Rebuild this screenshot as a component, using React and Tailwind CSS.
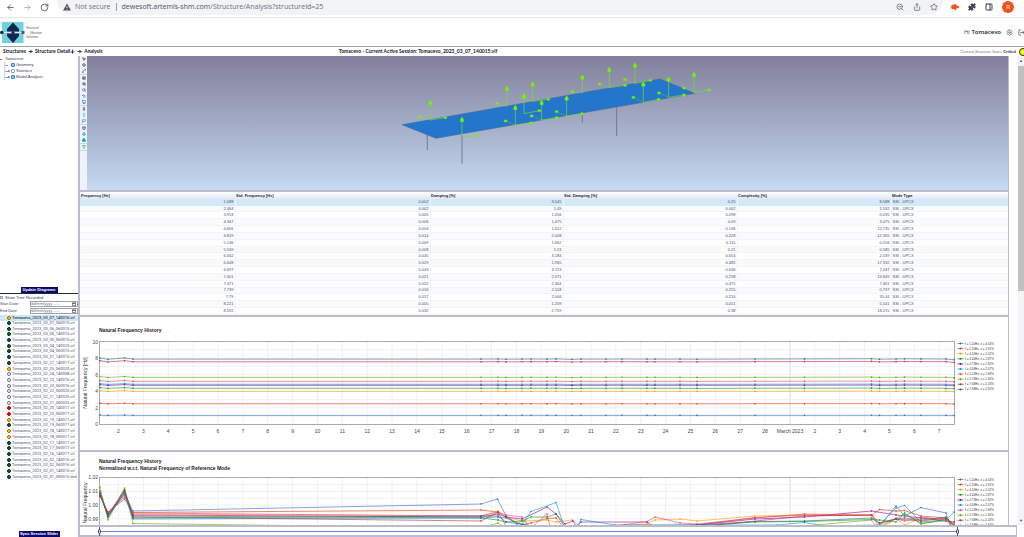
import { useState } from 'react';
import {
  ArrowLeft, ArrowRight, ArrowDown, RotateCw, ZoomOut, Share, Star, Puzzle,
  PanelRight, EllipsisVertical, Settings, LogOut, MousePointer2, Move, Spline, Printer,
  ZoomIn, Search, Undo2, Monitor, Pin, MoveVertical, Flag, Box, Rotate3d, Boxes, Filter,
} from 'lucide-react';

const COLORS = ['#3366cc', '#dc3912', '#ff9900', '#109618', '#990099', '#0099c6', '#dd4477', '#66aa00', '#b82e2e', '#316395'];

const SESSIONS = [
  ['03_07_140016', 'yellow'], ['03_07_060015', 'green'], ['03_06_060015', 'green'], ['03_05_140015', 'green'],
  ['03_05_060015', 'green'], ['03_04_140015', 'green'], ['03_04_060015', 'green'], ['03_01_140015', 'green'],
  ['02_27_140017', 'green'], ['02_25_060020', 'yellow'], ['02_24_140008', 'white'], ['02_23_140016', 'white'],
  ['02_23_060016', 'white'], ['02_22_060025', 'white'], ['02_21_140025', 'white'], ['02_21_060025', 'white'],
  ['02_20_140017', 'red'], ['02_20_060017', 'red'], ['02_19_140017', 'yellow'], ['02_19_060017', 'green'],
  ['02_18_140017', 'yellow'], ['02_18_060017', 'yellow'], ['02_17_140017', 'green'], ['02_17_060017', 'green'],
  ['02_16_140017', 'green'], ['02_02_140016', 'green'], ['02_02_060016', 'green'], ['02_01_140015', 'green'],
];

const DOTS = {
  yellow: 'bg-yellow-300 border-yellow-700',
  green: 'bg-green-800 border-green-950',
  white: 'bg-white border-gray-500',
  red: 'bg-red-600 border-red-700',
};

const MODES = [
  ['1.088', '0.002', '3.545', '0.25', '8.588'],
  ['2.464', '0.002', '1.49', '0.062', '1.532'],
  ['3.953', '0.005', '1.056', '0.098', '0.035'],
  ['4.347', '0.006', '1.475', '0.09', '3.075'],
  ['4.666', '0.004', '1.612', '0.136', '12.735'],
  ['4.819', '0.014', '2.008', '0.228', '12.365'],
  ['5.136', '0.009', '1.662', '0.115', '0.556'],
  ['5.569', '0.008', '1.53', '0.21', '0.585'],
  ['6.062', '0.045', '3.184', '0.654', '2.039'],
  ['6.648', '0.029', '1.965', '0.482', '17.332'],
  ['6.697', '0.043', '3.723', '0.636', '7.437'],
  ['7.401', '0.021', '2.071', '0.258', '13.849'],
  ['7.471', '0.022', '2.364', '0.475', '7.461'],
  ['7.739', '0.016', '2.558', '0.255', '0.737'],
  ['7.79', '0.017', '2.006', '0.216', '35.44'],
  ['8.221', '0.005', '1.209', '0.051', '5.541'],
  ['8.592', '0.032', '2.759', '0.38', '18.215'],
];

const LEGEND = [
  ['1.10', '4.04'], ['2.50', '1.91'], ['4.01', '1.02'], ['4.40', '1.87'], ['4.72', '1.90'],
  ['4.84', '2.07'], ['5.21', '1.68'], ['5.70', '1.30'], ['7.66', '2.18'], ['7.94', '2.30'],
];

const DAYS = [...Array.from({ length: 27 }, (_, i) => String(i + 2)), 'March 2023', '2', '3', '4', '5', '6', '7'];
const dayX = (i) => 38.5 + i * 24.87;

const TIMES = [20, 28, 44.5, 53, 401, 418, 426, 442, 451, 467, 476, 492, 501, 526, 542, 567, 575, 600, 617, 675, 724.5, 791.5, 799.5, 816, 824.5, 841, 866, 874];
const LEVELS = [1.1, 2.5, 4, 4.36, 4.72, 4.84, 5.2, 5.68, 7.56, 7.88];
const WOBBLE = [0.12, -0.02, 0.12, 0, 0, 0.01, -0.01, 0, 0.01, 0, 0.02, -0.03, 0, 0, 0.01, 0, 0, 0, -0.01, 0.01, 0.02, 0.04, -0.01, 0.01, 0.03, 0.02, 0.01, -0.08];
const HISTORY = LEVELS.map((v) => TIMES.map((t, i) => [t, 107.5 - 8.3 * (v + WOBBLE[i] * (v / 8 + 0.1))]));

const NORMALIZED = [
  [[20, 42], [28, 62], [44.5, 42], [53, 59], [401, 52], [417.5, 47], [426, 64], [442, 76], [675, 80], [799.5, 74], [816, 54], [824.5, 64], [841, 55.5], [866, 61], [872, 78]],
  [[20, 44], [28, 60], [44.5, 47], [53, 60.5], [401, 58], [417.5, 60], [426, 65], [442, 73], [451, 71], [467, 66.5], [476, 66], [484, 76], [617, 73], [675, 65.5], [724.5, 63], [791.5, 63.5], [799.5, 57.5], [816, 59], [824.5, 58.5], [841, 64], [866, 66], [874, 72]],
  [[20, 41], [28, 64], [44.5, 41], [53, 62], [401, 64], [418, 59], [426, 65], [442, 69], [467, 68], [476, 70], [492, 68], [501, 76], [567, 72], [575, 68], [600, 67], [617, 69], [675, 64], [724.5, 63], [791.5, 63], [799.5, 73], [816, 66], [824.5, 73], [841, 66], [866, 67], [874, 72]],
  [[20, 39], [28, 65], [44.5, 38], [53, 64], [401, 66], [418, 68], [426, 70], [442, 69], [451, 65], [467, 65], [476, 62], [484, 74], [617, 74], [675, 70], [724.5, 69.5], [791.5, 67.5], [799.5, 68], [816, 70], [824.5, 61], [841, 72], [866, 67], [874, 73]],
  [[20, 42], [28, 63], [44.5, 40], [53, 63], [401, 65], [418, 62], [426, 65], [442, 67], [467, 55], [476, 62], [485, 72], [493, 69], [496, 74], [501, 70], [567, 70], [575, 76], [617, 73], [675, 67], [724.5, 65], [791.5, 59], [816, 63], [841, 66], [866, 69], [874, 70]],
  [[20, 40], [28, 64], [44.5, 43], [53, 67], [401, 66], [418, 65], [426, 66], [442, 73], [451, 59.5], [476, 50.5], [484, 74], [496, 80], [501, 67.5], [535, 73], [697, 73], [724.5, 70.5], [745, 74], [799.5, 73], [816, 56], [824.5, 53.5], [841, 70], [866, 68], [874, 60]],
  [[20, 43], [28, 61], [44.5, 45], [53, 61], [401, 64], [418, 60], [426, 63], [442, 65], [451, 76], [467, 62], [470, 75], [520, 76], [567, 69.5], [575, 65], [600, 71], [617, 72], [675, 66], [724.5, 62], [791.5, 63], [799.5, 76], [816, 67], [824.5, 69], [841, 65], [866, 68], [874, 73]],
  [[20, 35], [28, 68], [44.5, 36], [53, 71.5], [401, 76], [418, 71], [430, 78], [442, 68], [451, 76], [675, 76], [724.5, 74], [791.5, 68], [797, 76], [824.5, 62], [841, 71], [866, 69], [874, 76]],
  [[20, 44], [28, 62], [44.5, 38], [53, 65], [401, 69], [418, 60], [426, 74], [617, 75], [724.5, 64], [791.5, 63], [799.5, 71], [816, 67], [841, 69], [866, 66], [874, 74]],
  [[20, 41], [28, 65], [44.5, 40], [53, 66], [401, 64], [418, 64], [426, 70], [442, 72], [451, 74], [617, 73], [675, 69.5], [724.5, 69], [791.5, 66], [799.5, 71], [816, 67], [824.5, 66], [841, 68], [866, 65], [874, 76]],
];

// [x, y, arrow tip y, left tip, right tip]
const SENSORS = [
  [151, 195, 137, [121, 186], [196, 188]],
  [246, 246, 188, null, [291, 241]],
  [381, 154, 95, [352, 145], null],
  [458, 139, 82, [430, 128], [505, 133]],
  [432, 176, 117, null, [478, 167]],
  [406, 211, 152, [377, 198], [453, 204]],
  [485, 195, 137, [455, 183], [530, 188]],
  [560, 183, 124, [530, 170], [606, 176]],
  [607, 114, 61, [577, 110], null],
  [688, 98, 38, [659, 87], [735, 91]],
  [765, 85, 25, [735, 74], [811, 76]],
  [790, 142, 82, [760, 127], [836, 133]],
  [866, 127, 67, [837, 114], [912, 120]],
  [942, 113, 53, [912, 99], [988, 105]],
];

const TOOLS = [
  [[MousePointer2, 'Select', 'text-black'], [Move, 'Move', 'text-gray-700'], [Spline, 'Path', 'text-gray-600']],
  [[Printer, 'Print', 'text-gray-700'], [ZoomIn, 'Zoom in', 'text-gray-700'], [Search, 'Zoom window', 'text-purple-800'], [Undo2, 'Undo', 'text-blue-600'], [Monitor, 'Display', 'text-blue-600']],
  [[Pin, 'Pin', 'text-gray-700'], [MoveVertical, 'Vertical', 'text-sky-500'], [Flag, 'Flag', 'text-blue-600']],
  [[Box, 'Solid', 'text-blue-900'], [Rotate3d, 'Rotate', 'text-cyan-600'], [Boxes, 'Blocks', 'text-cyan-600']],
  [[Filter, 'Filter', 'text-green-600']],
];

function BrowserBar() {
  return (
    <div className="flex h-[18px] shrink-0 items-center border-b border-gray-200 bg-white pb-[3px] font-['Open_Sans',sans-serif] text-[7px] text-gray-600">
      <div className="flex w-[57px] shrink-0 items-center gap-2 pl-[6px]">
        <button aria-label="Back"><ArrowLeft size={9} className="text-gray-700" /></button>
        <button aria-label="Forward"><ArrowRight size={9} className="text-gray-400" /></button>
        <button aria-label="Reload"><RotateCw size={9} className="text-gray-700" /></button>
      </div>
      <div className="flex h-[15px] flex-1 items-center rounded-b-full bg-[#f1f3f4] pr-[5px] pl-[6px]">
        <svg viewBox="0 0 8 8" className="mr-1 size-2">
          <path d="M4 .5 L8 7.500 H0 Z" fill="#555" />
          <path d="M4 3 V5 M4 5.800 V6.600" stroke="#fff" strokeWidth=".8" />
        </svg>
        <span className="text-gray-500">Not secure</span>
        <span className="mx-[5px] h-2 w-px bg-gray-400" />
        <span>dewesoft.artemis-shm.com<span className="text-gray-500">/Structure/Analysis?structureId=25</span></span>
        <div className="ml-auto flex gap-[9px]">
          <ZoomOut size={8} />
          <Share size={8} />
          <Star size={8} />
        </div>
      </div>
      <div className="flex w-[81px] shrink-0 items-center gap-[9px] pl-2">
        <svg viewBox="0 0 8 8" className="size-2 shrink-0">
          <path d="M0 3 L2 1.500 L3 2 L4 .5 L5.500 2.300 L8 3.500 V5 L5.500 5.500 L4.500 7.500 L3 6 L.5 6 Z" fill="#f4511e" />
        </svg>
        <Puzzle size={8} className="shrink-0 fill-gray-700 text-gray-700" />
        <PanelRight size={8} className="shrink-0 text-gray-700" strokeWidth={3} />
        <span className="flex size-3 shrink-0 items-center justify-center rounded-full bg-[#f4511e] text-[6px] text-white">R</span>
        <EllipsisVertical size={9} className="shrink-0" />
      </div>
    </div>
  );
}

function Logo() {
  return (
    <svg viewBox="0 0 44 23" className="h-[23px] w-11">
      <rect x="2" y="1" width="21.500" height="21" fill="#6fd3de" />
      <path d="M13 1.500 L19 8 V10.500 H7 V8 Z M7 12.500 H19 V15 L13 22 L7 15 Z" fill="#18264f" />
      <path d="M0 11.500 H24" stroke="#dfe8ee" strokeWidth="1" />
      <circle cx="1.800" cy="11.500" r="1.800" fill="#18264f" />
      <circle cx="13" cy="11.500" r="1.600" fill="#18264f" />
      <rect x="21.500" y="10" width="3" height="3" fill="#4a5674" />
      <g fontFamily="Liberation Sans, sans-serif" fontSize="3" fill="#555">
        <text x="26" y="8">Structural</text>
        <text x="30" y="12.500">Vibration</text>
        <text x="26" y="17">Solutions</text>
      </g>
    </svg>
  );
}

function Header() {
  return (
    <>
      <header className="flex h-[29px] shrink-0 items-center justify-between border-b border-gray-400 pt-px">
        <Logo />
        <div className="flex items-center gap-[5px] font-['Open_Sans',sans-serif] text-[6px] text-gray-700">
          <span>Hi <span className="font-semibold text-gray-900">Tomacevo</span></span>
          <button aria-label="Settings"><Settings size={7} className="text-gray-600" /></button>
          <button aria-label="Log out" className="-mr-px"><LogOut size={7} className="text-gray-800" /></button>
        </div>
      </header>
      <div className="flex h-[9px] shrink-0 items-center font-['Lato',sans-serif] text-[5px] leading-none text-gray-900">
        <nav className="flex flex-1 items-center gap-[2px] pl-[3px] font-bold">
          <a href="#structures">Structures</a>
          <ArrowRight size={5} strokeWidth={4} />
          <a href="#detail" className="flex items-center">Structure Detail<ArrowDown size={5} strokeWidth={4} /></a>
          <ArrowRight size={5} strokeWidth={4} />
          <a href="#analysis">Analysis</a>
        </nav>
        <h1 className="pr-[191px] font-bold">Tomacevo - Current Active Session: Tomacevo_2023_03_07_140015.vif</h1>
        <div className="flex flex-1 items-center justify-end gap-[3px] overflow-hidden text-[4px] text-gray-500">
          <span className="whitespace-nowrap">Current Structure State: <b className="text-gray-800">Critical</b></span>
          <span className="-mr-[3px] size-2 shrink-0 rounded-full border border-gray-800 bg-[#ffff00]" />
        </div>
      </div>
    </>
  );
}

function TreeItem({ label, checked, expandable }) {
  return (
    <li className="flex h-[6px] items-center">
      <span className="h-px w-[3px] bg-gray-400" />
      <span className="w-[3px] text-[4px]">{expandable ? '▸' : ''}</span>
      <label className="flex items-center gap-px">
        <input
          type="checkbox"
          defaultChecked={checked}
          className="size-1 appearance-none rounded-[1px] border border-gray-400 bg-white checked:border-blue-500 checked:bg-blue-300"
        />
        {label}
      </label>
    </li>
  );
}

function DateField({ id, label }) {
  return (
    <div className="flex h-[7px] items-center">
      <label htmlFor={id} className="w-[30px]">{label}</label>
      <div className="flex h-[6px] flex-1 items-center border border-gray-400 pr-px">
        <input id={id} placeholder="dd/mm/yyyy --:--" className="w-full min-w-0 text-[4px] leading-none placeholder:text-gray-500" />
        <svg viewBox="0 0 5 5" className="size-1 shrink-0" fill="none" stroke="#222" strokeWidth=".7">
          <path d="M.5 1 H4.500 V4.500 H.5 Z M.5 1.800 H4.500" />
        </svg>
      </div>
    </div>
  );
}

function Sidebar() {
  const [active, setActive] = useState(0);
  const files = [...SESSIONS.map(([name, dot]) => [`Tomacevo_2023_${name}.vif`, dot]), ['Tomacevo_2023_02_01_060015.dxd', 'green']];
  return (
    <aside className="flex w-[78px] shrink-0 flex-col overflow-hidden text-[4px] leading-none text-gray-700">
      <div className="h-[231px]">
        <p className="flex h-[6px] items-center gap-[3px]"><span className="h-px w-[2px] bg-gray-500" />Tomacevo</p>
        <ul className="ml-1 border-l border-gray-300">
          <TreeItem label="Geometry" checked />
          <TreeItem label="Statistics" expandable />
          <TreeItem label="Modal Analysis" checked expandable />
        </ul>
      </div>
      <button className="mx-auto h-[6px] w-[37px] bg-[#0a0a6a] font-bold text-white">Update Diagrams</button>
      <div className="border-t border-gray-800 py-px">
        <label className="flex h-[5px] items-center gap-[2px]">
          <input type="checkbox" className="size-[3px] appearance-none border border-gray-400" />
          Show Time Recorded
        </label>
        <DateField id="start" label="Start Date:" />
        <DateField id="end" label="End Date:" />
      </div>
      <ul className="grid h-[165px] auto-rows-fr font-['Roboto',sans-serif]">
        {files.map(([name, dot], i) => (
          <li key={name} className={i === active ? 'bg-[#cfe5f8] text-black' : 'border-b border-gray-100 text-gray-600'}>
            <button onClick={() => setActive(i)} className="flex h-full w-full items-center gap-px pl-[7px]">
              <span className={`size-1 shrink-0 rounded-full border ${DOTS[dot]}`} />
              <span className="whitespace-nowrap">{name}</span>
            </button>
          </li>
        ))}
      </ul>
      <button className="mx-auto mt-auto h-[6px] w-[41px] bg-[#0a0a6a] font-bold text-white">Sync Session Slider</button>
    </aside>
  );
}

function Viewer() {
  return (
    <section className="flex border-b-2 border-[#bcbccc]">
      <div className="flex w-[7px] shrink-0 flex-col bg-[#eef3fa]">
        {TOOLS.map((group, i) => (
          <div key={i} className="flex flex-col items-center gap-[2px] border-b border-gray-300 py-px">
            {group.map(([Icon, label, color]) => (
              <button key={label} aria-label={label}><Icon size={4} strokeWidth={3} className={color} /></button>
            ))}
          </div>
        ))}
      </div>
      <svg viewBox="0 0 921 134" className="min-w-0 flex-1 bg-linear-to-b from-[#82809a] to-[#c5daf3]">
        <g transform="translate(293 -1) scale(.3333)">
          <path d="M142 235V285M246 240V326M607 170V203M710 150V243" stroke="#77778f" strokeWidth="3" />
          <polygon points="66,209 168,250 945,115 840,72" fill="#2376cb" stroke="#3b6296" strokeWidth="1.500" />
          {SENSORS.map(([x, y, top, left, right]) => (
            <g key={`${x}-${y}`} fill="#73f500" stroke="#73e02a">
              <path d={`M${x} ${y}V${top}`} strokeWidth="2" />
              {left && <path d={`M${x} ${y}L${left[0]} ${left[1]}`} strokeWidth="1.500" strokeDasharray="5 2" />}
              {right && <path d={`M${x} ${y}L${right[0]} ${right[1]}`} strokeWidth="2" />}
              <path d={`M${x} ${top - 2}l5 8v6h-10v-6z`} />
              {left && <ellipse cx={left[0]} cy={left[1]} rx="5" ry="3.500" />}
              {right && <ellipse cx={right[0]} cy={right[1]} rx="5" ry="3.500" />}
            </g>
          ))}
        </g>
      </svg>
    </section>
  );
}

function ModeTable() {
  return (
    <section className="border-b-2 border-[#bcbccc]">
      <table className="h-[123px] w-full table-fixed text-right text-[4px] leading-none text-gray-600">
        <colgroup>
          <col className="w-[155px]" />
          <col className="w-[195px]" />
          <col className="w-[133px]" />
          <col className="w-[174px]" />
          <col className="w-[154px]" />
          <col />
        </colgroup>
        <thead>
          <tr className="h-[7px] bg-linear-to-b from-white to-slate-200 text-left text-gray-800">
            {['Frequency [Hz]', 'Std. Frequency [Hz]', 'Damping [%]', 'Std. Damping [%]', 'Complexity [%]', 'Mode Type'].map((h) => (
              <th key={h} className="h-[7px] px-px font-bold">{h}</th>
            ))}
          </tr>
        </thead>
        <tbody>
          {MODES.map((row, i) => (
            <tr key={row[0]} className={i === 0 ? 'border-b border-[#d3e8f8] bg-[#d3e8f8]' : 'border-b border-gray-100 odd:bg-white even:bg-gray-50'}>
              {row.map((v, j) => <td key={j} className="border-r border-gray-100 px-px">{v}</td>)}
              <td className="px-px text-left">SSI - UPCX</td>
            </tr>
          ))}
        </tbody>
      </table>
    </section>
  );
}

function Plot({ titles, titleAt, yTitle, yTitleAt, ticks, top, bottom, minor, series, labels }) {
  const lines = [];
  for (let y = top; y < bottom; y += minor) lines.push(y);
  return (
    <svg viewBox="0 0 928 133" className="block w-full" fontFamily="Liberation Sans, sans-serif">
      {titles.map((t, i) => (
        <text key={t} x="19" y={titleAt + i * 7} fontSize="5" fontWeight="bold" fill="#222">{t}</text>
      ))}
      {DAYS.map((d, i) => (
        <g key={i}>
          <path d={`M${dayX(i)} ${top}V${bottom}`} stroke={d === 'March 2023' ? '#ddd' : '#f1f1f1'} />
          {labels && <text x={dayX(i)} y="116" fontSize="5" textAnchor="middle" fill="#444">{d}</text>}
        </g>
      ))}
      {lines.map((y) => <path key={y} d={`M20 ${y}H874`} stroke="#f1f1f1" />)}
      <rect x="19.500" y={top} width="855" height={bottom - top} fill="none" stroke="#aaa" />
      {ticks.map(([t, y]) => (
        <text key={t} x="18" y={y + 2} fontSize="5" textAnchor="end" fill="#444">{t}</text>
      ))}
      <text transform={`translate(7 ${yTitleAt}) rotate(-90)`} textAnchor="middle" fontSize="5" fill="#333">{yTitle}</text>
      {series.map((points, i) => (
        <g key={i} fill={COLORS[i]}>
          <polyline points={points.join(' ')} fill="none" stroke={COLORS[i]} strokeWidth=".8" opacity=".75" />
          {points.map(([x, y]) => <circle key={x} cx={x} cy={y} r=".8" />)}
        </g>
      ))}
      {LEGEND.map(([f, z], i) => (
        <g key={f} fill={COLORS[i]}>
          <path d={`M877.500 ${top + 2 + i * 5.1}h6`} stroke={COLORS[i]} strokeWidth=".7" />
          <circle cx="880.500" cy={top + 2 + i * 5.1} r="1" />
          <text x="885" y={top + 3 + i * 5.1} fontSize="3" fill="#333">{`f = ${f}Hz, z = ${z}%`}</text>
        </g>
      ))}
    </svg>
  );
}

const THUMB = 'pointer-events-none col-start-1 row-start-1 h-[9px] w-full appearance-none bg-transparent [&::-webkit-slider-thumb]:h-[5px] [&::-webkit-slider-thumb]:w-[3px] [&::-webkit-slider-thumb]:appearance-none [&::-webkit-slider-thumb]:rounded-full [&::-webkit-slider-thumb]:border [&::-webkit-slider-thumb]:border-gray-700 [&::-webkit-slider-thumb]:bg-gray-300';

function SessionSlider() {
  return (
    <div className="mr-[7px] grid h-[12px] shrink-0 items-center border-y-2 border-r border-[#bcbccc] pr-[57px] pl-[18px]">
      <div className="col-start-1 row-start-1 mx-px flex h-full items-center border-x border-gray-600">
        <div className="h-px w-full bg-[#6a8fd8]" />
      </div>
      <input type="range" aria-label="First session" defaultValue="0" className={THUMB} />
      <input type="range" aria-label="Last session" defaultValue="100" className={THUMB} />
    </div>
  );
}

export default function App() {
  return (
    <div className="flex h-screen flex-col overflow-hidden bg-white font-['Liberation_Sans',sans-serif]">
      <BrowserBar />
      <Header />
      <div className="flex min-h-0 flex-1">
        <Sidebar />
        <div className="flex min-w-0 flex-1 flex-col border-l-2 border-[#bcbccc]">
          <div className="flex min-h-0 flex-1">
            <main className="min-w-0 flex-1 overflow-hidden border-r border-[#bcbccc]">
              <Viewer />
              <ModeTable />
              <section className="border-b-2 border-[#bcbccc]">
                <Plot
                  titles={['Natural Frequency History']}
                  titleAt={15}
                  yTitle="Natural Frequency [Hz]"
                  yTitleAt={66}
                  ticks={[['10', 25], ['8', 41], ['6', 58], ['4', 74], ['2', 91], ['0', 107]]}
                  top={24.5}
                  bottom={107.5}
                  minor={8.3}
                  series={HISTORY}
                  labels
                />
              </section>
              <section>
                <Plot
                  titles={['Natural Frequency History', 'Normalized w.r.t. Natural Frequency of Reference Mode']}
                  titleAt={11}
                  yTitle="Natural Frequency"
                  yTitleAt={51}
                  ticks={[['1.02', 25], ['1.01', 39], ['1.00', 53], ['0.99', 67]]}
                  top={25.5}
                  bottom={132}
                  minor={6.9}
                  series={NORMALIZED}
                />
              </section>
            </main>
            <div className="ml-[9px] flex w-[6px] shrink-0 flex-col items-center bg-gray-100 text-[4px] leading-none text-gray-600">
              <button aria-label="Scroll up" className="h-[10px]">▲</button>
              <div className="h-[225px] w-full bg-[#c1c1c1]" />
              <button aria-label="Scroll down" className="mt-auto h-[8px]">▼</button>
            </div>
          </div>
          <SessionSlider />
        </div>
      </div>
    </div>
  );
}
